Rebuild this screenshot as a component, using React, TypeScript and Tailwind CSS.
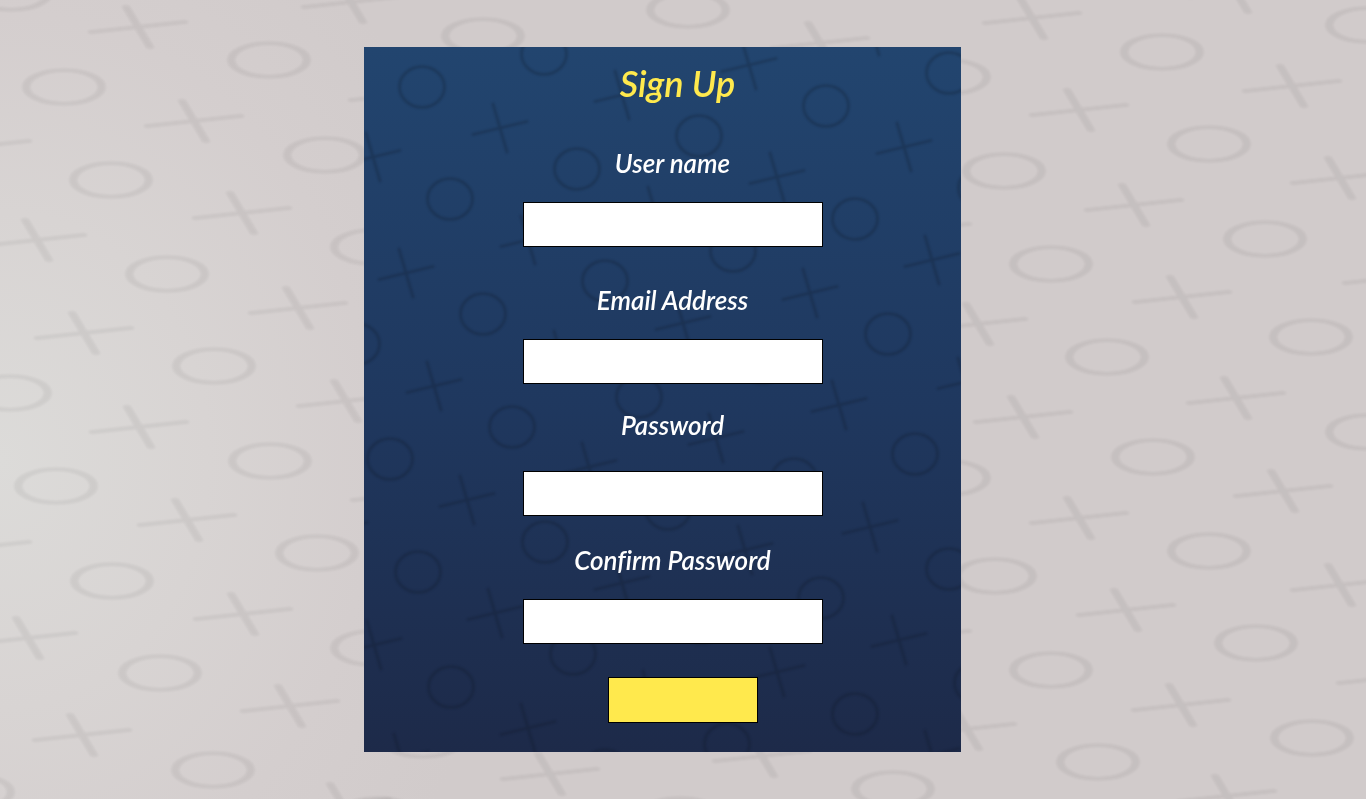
import React from "react";

type Point = [number, number];

const pageNoughts: Point[] = [
  [11, -7], [64, 87], [269, 60], [111, 180], [325, 155], [372, 247], [167, 274],
  [214, 366], [10, 393], [56, 486], [270, 461], [317, 553], [112, 581], [160, 673],
  [213, 770], [372, 648], [-27, 792], [483, 36], [688, 10], [1162, 52], [1367, 25],
  [949, 77], [1209, 144], [1004, 171], [1265, 239], [1051, 264], [1107, 357],
  [1311, 337], [1153, 457], [1367, 432], [949, 478], [1209, 551], [995, 576],
  [1256, 643], [1051, 670], [1098, 762], [1312, 738], [893, 789], [423, 740],
  [680, 815], [378, 815],
];

const pageCrosses: Point[] = [
  [138, 27], [-18, 146], [194, 121], [351, 2], [242, 213], [37, 240], [398, 95],
  [84, 333], [298, 308], [139, 427], [346, 401], [187, 520], [400, 495], [-18, 547],
  [28, 638], [243, 614], [82, 735], [290, 706], [342, 804], [820, 43], [1032, 18],
  [1236, -8], [1079, 110], [1292, 86], [1134, 205], [1340, 178], [922, 229],
  [1182, 297], [1392, 278], [978, 324], [1236, 398], [1023, 417], [1283, 491],
  [1079, 518], [1126, 610], [1340, 585], [922, 636], [967, 729], [1181, 705],
  [1386, 678], [1227, 796], [550, 774], [762, 756],
];

const cardNoughts: Point[] = [
  [58, 40], [180, 7], [213, 122], [86, 152], [241, 234], [119, 267], [-7, 297],
  [148, 380], [26, 412], [275, 350], [304, 462], [181, 495], [54, 525], [209, 607],
  [87, 640], [335, 89], [462, 59], [585, 26], [491, 172], [369, 204], [524, 287],
  [551, 407], [430, 432], [398, 316], [585, 522], [457, 551], [491, 667], [363, 697],
  [337, 576], [613, 636], [617, 141], [241, 723],
];

const cardCrosses: Point[] = [
  [136, 81], [258, 48], [9, 110], [291, 164], [164, 193], [42, 226], [385, 18],
  [508, -16], [413, 130], [540, 100], [568, 213], [446, 246], [319, 276], [197, 308],
  [70, 339], [475, 358], [601, 335], [352, 391], [225, 420], [103, 453], [-24, 482],
  [381, 503], [506, 480], [258, 536], [131, 566], [10, 598], [413, 625], [535, 593],
  [286, 648], [164, 681], [37, 711], [568, 708],
];

function PagePattern() {
  return (
    <svg
      aria-hidden="true"
      viewBox="0 0 1366 799"
      preserveAspectRatio="none"
      className="pointer-events-none absolute inset-0 h-full w-full"
    >
      <defs>
        <filter id="soften" colorInterpolationFilters="sRGB">
          <feGaussianBlur stdDeviation="0.8" />
        </filter>
      </defs>
      <g filter="url(#soften)" fill="none" stroke="#140a0a" strokeOpacity="0.06" strokeWidth="3.6" strokeLinecap="round">
        {pageNoughts.map(([x, y]) => (
          <circle key={`${x} ${y}`} r="16.8" transform={`translate(${x} ${y}) scale(2.25 1)`} />
        ))}
        {pageCrosses.map(([x, y]) => (
          <path
            key={`${x} ${y}`}
            d="M-20.5 5L20.5 -5M-5.3 -20L5.3 20"
            transform={`translate(${x} ${y}) scale(2.25 1)`}
          />
        ))}
      </g>
    </svg>
  );
}

function CardPattern() {
  return (
    <svg
      aria-hidden="true"
      viewBox="0 0 597 705"
      preserveAspectRatio="none"
      className="pointer-events-none absolute inset-0 h-full w-full"
    >
      <g filter="url(#soften)" fill="none" stroke="#0c1420" strokeOpacity="0.24" strokeWidth="2.8" strokeLinecap="round">
        {cardNoughts.map(([x, y]) => (
          <ellipse key={`${x} ${y}`} cx={x} cy={y} rx="22.5" ry="20.3" />
        ))}
        {cardCrosses.map(([x, y]) => (
          <path
            key={`${x} ${y}`}
            d="M-27 6.5L27 -6.5M-7 -24L7 24"
            transform={`translate(${x} ${y})`}
          />
        ))}
      </g>
    </svg>
  );
}

const fields = [
  { id: "username", label: "User name", type: "text", spacing: "mt-[45px] gap-[23px]" },
  { id: "email", label: "Email Address", type: "email", spacing: "mt-[38px] gap-[23px]" },
  { id: "password", label: "Password", type: "password", spacing: "mt-[26px] gap-[30px]" },
  { id: "confirm", label: "Confirm Password", type: "password", spacing: "mt-[29px] gap-[23px]" },
];

export default function App() {
  return (
    <main className="relative flex min-h-screen justify-center bg-[radial-gradient(ellipse_520px_620px_at_0px_460px,#dcdbd9_0%,#d8d4d3_40%,#d4cece_72%,#d1cbcb_100%)] pt-[47px] pr-[41px] pb-[47px] font-['Lato',sans-serif] italic">
      <PagePattern />
      <form
        onSubmit={(event) => event.preventDefault()}
        className="relative w-full max-w-[597px] bg-linear-to-b from-[#22456f] via-[#1f385f] to-[#1d2a49] pt-4 pb-[29px]"
      >
        <CardPattern />
        <div className="relative flex flex-col items-center pl-5">
          <h1 className="pl-2.5 text-4xl leading-10 font-semibold text-[#ffe94d]">Sign Up</h1>
          {fields.map((field) => (
            <div key={field.id} className={`flex flex-col items-center ${field.spacing}`}>
              <label
                htmlFor={field.id}
                className="text-[26px] leading-[31px] font-semibold text-white [font-variant-ligatures:none]"
              >
                {field.label}
              </label>
              <input
                id={field.id}
                name={field.id}
                type={field.type}
                className="h-[45px] w-[300px] border border-black bg-white px-3 text-lg text-gray-900"
              />
            </div>
          ))}
          <div className="mt-[33px] pl-5">
            <button
              type="submit"
              aria-label="Sign Up"
              className="block h-[46px] w-[150px] cursor-pointer border border-black bg-[#ffe94d]"
            />
          </div>
        </div>
      </form>
    </main>
  );
}
